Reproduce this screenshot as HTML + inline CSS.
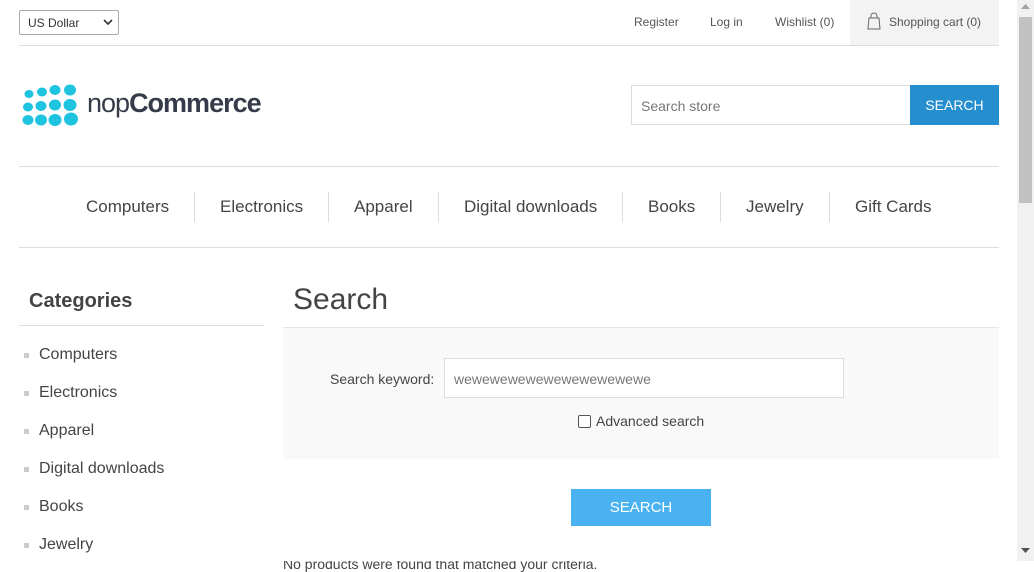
<!DOCTYPE html>
<html><head><meta charset="utf-8"><style>
*{box-sizing:border-box;margin:0;padding:0}
body{width:1034px;height:561px;overflow:hidden;font-family:"Liberation Sans",Arial,sans-serif;color:#444;background:#fff;position:relative}
.abs{position:absolute}
.top a{position:absolute;top:15px;font-size:12px;color:#555;}
.menu span{position:absolute;top:197px;font-size:17px;color:#444}
.sep{position:absolute;top:192px;width:1px;height:30px;background:#ddd}
.cat{position:absolute;left:39px;font-size:16px;color:#444}
.bul{position:absolute;left:24px;width:5px;height:5px;background:#ccc}
</style></head><body>
<div class="abs" style="left:19px;top:10px;width:100px;height:25px;border:1px solid #aaa;border-radius:2px;font-size:12px;color:#333;padding:5px 0 0 8px">US Dollar
<svg class="abs" style="right:5px;top:8px" width="10" height="7" viewBox="0 0 10 7"><path d="M1 1l4 4 4-4" stroke="#333" stroke-width="1.6" fill="none"/></svg></div>
<div class="top"><a style="left:634px">Register</a><a style="left:710px">Log in</a><a style="left:775px">Wishlist (0)</a></div>
<div class="abs" style="left:850px;top:0;width:149px;height:45px;background:#f3f3f3"></div>
<svg class="abs" style="left:866px;top:12px" width="16" height="18" viewBox="0 0 16 18"><path d="M5 6V4a3 3 0 0 1 6 0v2M3 6h10l1 11H2z" stroke="#666" stroke-width="1" fill="none"/></svg>
<span class="abs" style="left:889px;top:15px;font-size:12px;color:#555">Shopping cart (0)</span>
<div class="abs" style="left:19px;top:45px;width:980px;height:1px;background:#ddd"></div>
<svg class="abs" style="left:20px;top:83px" width="62" height="46" viewBox="0 0 62 46">
<g fill="#1ec3e0">
<ellipse cx="9" cy="11" rx="4.5" ry="4"/><ellipse cx="22" cy="9" rx="5" ry="4.5"/><ellipse cx="35" cy="7" rx="5.5" ry="5"/><ellipse cx="50" cy="7" rx="6" ry="5.5"/>
<ellipse cx="8" cy="24" rx="5" ry="4.5"/><ellipse cx="21" cy="23" rx="5.5" ry="5"/><ellipse cx="35" cy="22" rx="6" ry="5.5"/><ellipse cx="50" cy="22" rx="6.5" ry="6"/>
<ellipse cx="8" cy="37" rx="5.5" ry="5"/><ellipse cx="21" cy="37" rx="6" ry="5.5"/><ellipse cx="35" cy="37" rx="6.5" ry="6"/><ellipse cx="51" cy="36" rx="7" ry="6.5"/>
</g></svg>
<div class="abs" style="left:87px;top:88px;font-size:27px;color:#353b48;letter-spacing:-1px">nop<b>Commerce</b></div>
<div class="abs" style="left:631px;top:85px;width:280px;height:40px;border:1px solid #ddd;font-size:14px;color:#777;padding:12px 0 0 9px">Search store</div>
<div class="abs" style="left:910px;top:85px;width:89px;height:40px;background:#248ece;color:#fff;font-size:14px;text-align:center;padding-top:12px">SEARCH</div>
<div class="abs" style="left:19px;top:166px;width:980px;height:1px;background:#ddd"></div>
<div class="menu"><span style="left:86px">Computers</span><span style="left:220px">Electronics</span><span style="left:354px">Apparel</span><span style="left:464px">Digital downloads</span><span style="left:648px">Books</span><span style="left:746px">Jewelry</span><span style="left:855px">Gift Cards</span></div>
<div class="sep" style="left:194px"></div><div class="sep" style="left:328px"></div><div class="sep" style="left:438px"></div><div class="sep" style="left:622px"></div><div class="sep" style="left:720px"></div><div class="sep" style="left:829px"></div>
<div class="abs" style="left:19px;top:247px;width:980px;height:1px;background:#ddd"></div>
<div class="abs" style="left:29px;top:290px;font-size:20px;font-weight:bold;color:#444">Categories</div>
<div class="abs" style="left:19px;top:325px;width:245px;height:1px;background:#ddd"></div>
<div class="bul" style="top:353px"></div><div class="cat" style="top:346px">Computers</div>
<div class="bul" style="top:391px"></div><div class="cat" style="top:384px">Electronics</div>
<div class="bul" style="top:429px"></div><div class="cat" style="top:422px">Apparel</div>
<div class="bul" style="top:467px"></div><div class="cat" style="top:460px">Digital downloads</div>
<div class="bul" style="top:505px"></div><div class="cat" style="top:498px">Books</div>
<div class="bul" style="top:543px"></div><div class="cat" style="top:536px">Jewelry</div>
<div class="abs" style="left:293px;top:283px;font-size:30px;color:#444">Search</div>
<div class="abs" style="left:283px;top:327px;width:716px;height:132px;background:#f9f9f9;border-top:1px solid #e5e5e5"></div>
<div class="abs" style="left:330px;top:371px;font-size:14px;color:#444">Search keyword:</div>
<div class="abs" style="left:444px;top:358px;width:400px;height:40px;background:#fff;border:1px solid #ddd;font-size:14px;color:#777;padding:12px 0 0 9px">wewewewewewewewewewewe</div>
<div class="abs" style="left:578px;top:415px;width:13px;height:13px;border:1px solid #555;border-radius:2px;background:#fff"></div>
<div class="abs" style="left:596px;top:413px;font-size:14px;color:#444">Advanced search</div>
<div class="abs" style="left:571px;top:489px;width:140px;height:37px;background:#4ab2f1;color:#fff;font-size:15px;text-align:center;padding-top:10px">SEARCH</div>
<div class="abs" style="left:283px;top:556px;font-size:14px;color:#444">No products were found that matched your criteria.</div>
<div class="abs" style="left:0;top:559px;width:1017px;height:2px;background:#fff"></div>
<div class="abs" style="left:1017px;top:0;width:17px;height:561px;background:#f1f1f1"></div>
<div class="abs" style="left:1019px;top:17px;width:13px;height:186px;background:#c1c1c1"></div>
<svg class="abs" style="left:1021px;top:4px" width="9" height="6"><path d="M0 5L4.5 0 9 5z" fill="#a3a3a3"/></svg>
<svg class="abs" style="left:1021px;top:548px" width="9" height="6"><path d="M0 0L4.5 5 9 0z" fill="#505050"/></svg>
</body></html>
